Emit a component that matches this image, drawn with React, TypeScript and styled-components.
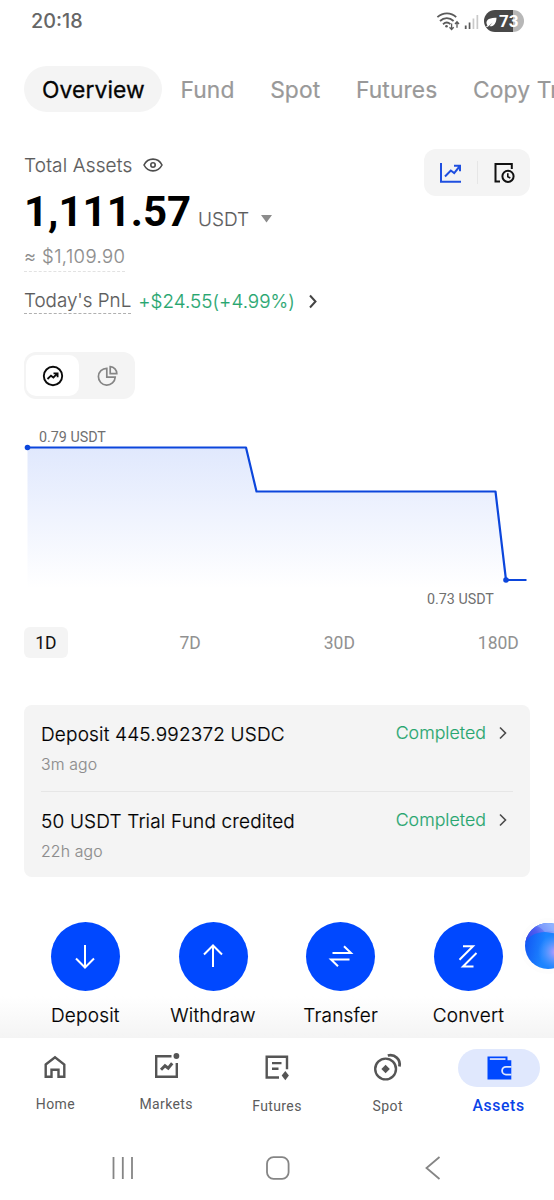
import React from "react";
import styled, { createGlobalStyle } from "styled-components";

const GlobalStyle = createGlobalStyle`
  *, *::before, *::after { box-sizing: border-box; }
  body { margin: 0; background: #fff; }
`;

const color = {
  blue: "#0048ff",
  text: "#0b0b0b",
  mid: "#5c5c5c",
  muted: "#8c8c8c",
  green: "#27a670",
  surface: "#f4f4f4",
};

const Screen = styled.div`
  width: 554px;
  height: 1200px;
  overflow: hidden;
  display: flex;
  flex-direction: column;
  position: relative;
  background: #fff;
  font-family: Inter, "Liberation Sans", sans-serif;
  color: ${color.text};
  white-space: nowrap;
`;

const StatusBar = styled.header`
  height: 66px;
  padding: 9px 30px 0 31px;
  display: flex;
  justify-content: space-between;
  align-items: flex-start;
`;

const Clock = styled.span`
  font-size: 19.8px;
  line-height: 25px;
  font-weight: 500;
  color: #666;
`;

const StatusIcons = styled.div`
  display: flex;
  align-items: center;
  height: 24px;
`;

const Tabs = styled.nav`
  display: flex;
  height: 46px;
  padding-left: 24px;
  flex-shrink: 0;
`;

const Tab = styled.span<{ $active?: boolean }>`
  font-size: 22.8px;
  line-height: 48px;
  font-weight: 400;
  letter-spacing: 0.12px;
  -webkit-text-stroke: ${(p) => (p.$active ? 0.3 : 0.2)}px currentColor;
  color: ${(p) => (p.$active ? "#050505" : "#999")};
  background: ${(p) => (p.$active ? color.surface : "transparent")};
  border-radius: 23px;
  padding: 0 17.6px 0 18px;
`;

const Summary = styled.section`
  display: flex;
  justify-content: space-between;
  padding: 37px 24px 0;
  height: 240px;
  flex-shrink: 0;
`;

const Balances = styled.div`
  display: flex;
  flex-direction: column;
  align-items: flex-start;
`;

const TitleRow = styled.div`
  display: flex;
  align-items: center;
  gap: 11px;
  height: 32px;
  font-size: 19px;
  font-weight: 300;
  letter-spacing: 0.15px;
  -webkit-text-stroke: 0.15px currentColor;
  color: ${color.mid};
`;

const AmountRow = styled.div`
  display: flex;
  align-items: baseline;
  height: 60px;
  line-height: 62px;
`;

const Amount = styled.span`
  font: 700 42px/62px Roboto, sans-serif;
  color: #000;
`;

const Currency = styled.span`
  font-size: 19px;
  font-weight: 300;
  -webkit-text-stroke: 0.15px currentColor;
  color: ${color.mid};
  margin: 0 12px 0 7px;
`;

const Approx = styled.div`
  height: 31px;
  line-height: 31px;
  font-size: 18.5px;
  font-weight: 300;
  letter-spacing: 0.4px;
  -webkit-text-stroke: 0.15px currentColor;
  color: ${color.muted};
  border-bottom: 1px dashed #e2e2e2;
`;

const PnlRow = styled.div`
  display: flex;
  align-items: flex-end;
  margin-top: 14px;
  height: 28px;
`;

const PnlLabel = styled.span`
  height: 28px;
  line-height: 29px;
  font-size: 18.8px;
  font-weight: 300;
  -webkit-text-stroke: 0.15px currentColor;
  color: ${color.mid};
  border-bottom: 1.5px dashed #b0b0b0;
`;

const PnlValue = styled.span`
  height: 28px;
  line-height: 31px;
  font-size: 18.8px;
  font-weight: 300;
  letter-spacing: 0.05px;
  -webkit-text-stroke: 0.15px currentColor;
  color: ${color.green};
  margin: 0 14px 0 7px;
`;

const ViewButtons = styled.div`
  width: 106px;
  height: 47px;
  border-radius: 12px;
  background: ${color.surface};
  display: flex;
  align-items: center;
  justify-content: space-between;
  padding: 0 14px;
`;

const Separator = styled.i`
  width: 1px;
  height: 23px;
  background: #e6e6e6;
`;

const ChartToggle = styled.div`
  width: 111px;
  height: 47px;
  margin-left: 24px;
  padding: 3px 2px;
  display: flex;
  flex-shrink: 0;
  border-radius: 12px;
  background: ${color.surface};
`;

const ToggleItem = styled.div<{ $active?: boolean }>`
  flex: ${(p) => (p.$active ? "0 0 53px" : "1")};
  display: flex;
  align-items: center;
  justify-content: center;
  padding-left: ${(p) => (p.$active ? 0 : 3)}px;
  border-radius: 10px;
  background: ${(p) => (p.$active ? "#fff" : "transparent")};
`;

const Chart = styled.svg`
  display: block;
  width: 554px;
  height: 228px;
  flex-shrink: 0;
  font: 400 14.3px Roboto, sans-serif;
`;

const Ranges = styled.div`
  display: flex;
  justify-content: space-between;
  height: 31px;
  flex-shrink: 0;
  padding: 0 23.5px;
`;

const Range = styled.span<{ $active?: boolean }>`
  font: 400 17.5px/32px Roboto, sans-serif;
  border-radius: 6px;
  padding: 0 11.7px;
  color: ${(p) => (p.$active ? "#111" : "#919191")};
  background: ${(p) => (p.$active ? color.surface : "transparent")};
`;

const Card = styled.section`
  margin: 47px 24px 0;
  height: 172px;
  flex-shrink: 0;
  padding: 0 17px;
  border-radius: 8px;
  background: ${color.surface};
`;

const Entry = styled.div`
  height: 86px;
  padding-top: 14px;
  display: flex;
  justify-content: space-between;
  & + & { border-top: 1px solid #e6e6e6; }
`;

const EntryTitle = styled.div`
  font-size: 19px;
  line-height: 31px;
  font-weight: 300;
  letter-spacing: 0.18px;
  -webkit-text-stroke: 0.2px currentColor;
  color: #000;
`;

const EntryTime = styled.div`
  font-size: 15.8px;
  line-height: 29px;
  font-weight: 300;
  letter-spacing: 0.15px;
  -webkit-text-stroke: 0.15px currentColor;
  color: ${color.muted};
`;

const EntryStatus = styled.div`
  display: flex;
  align-items: center;
  height: 27px;
  gap: 13px;
  padding-right: 6px;
  font-size: 17.8px;
  font-weight: 300;
  -webkit-text-stroke: 0.15px currentColor;
  color: ${color.green};
`;

const Actions = styled.section`
  position: relative;
  height: 161px;
  flex-shrink: 0;
  display: flex;
  padding: 44.5px 0 0 21.5px;
  background: linear-gradient(#fff 74%, #f4f4f4 100%);
`;

const Action = styled.div`
  width: 127.7px;
  display: flex;
  flex-direction: column;
  align-items: center;
  font-size: 19px;
  line-height: 31px;
  font-weight: 300;
  letter-spacing: 0.2px;
  -webkit-text-stroke: 0.2px currentColor;
  gap: 9px;
  color: #000;
`;

const ActionDisc = styled.div`
  width: 69px;
  height: 69px;
  border-radius: 50%;
  background: ${color.blue};
  display: flex;
  align-items: center;
  justify-content: center;
`;

const OrbButton = styled.svg`
  position: absolute;
  left: 519px;
  top: 40px;
  width: 58px;
  height: 58px;
`;

const BottomNav = styled.nav`
  height: 96px;
  flex-shrink: 0;
  display: flex;
  padding-top: 10.5px;
  background: #fff;
`;

const NavItem = styled.div<{ $active?: boolean; $drop?: number }>`
  width: 110.8px;
  display: flex;
  flex-direction: column;
  align-items: center;
  font: ${(p) => (p.$active ? "500 15.8px" : "400 14px")}/20px Roboto, sans-serif;
  letter-spacing: ${(p) => (p.$active ? "0.6px" : "0.4px")};
  color: ${(p) => (p.$active ? "#0a43e8" : color.mid)};
  gap: ${(p) => 7.5 + (p.$drop ?? 0)}px;
`;

const NavIcon = styled.div<{ $active?: boolean }>`
  width: 82px;
  height: 38px;
  border-radius: 19px;
  background: ${(p) => (p.$active ? "#e0e8fd" : "transparent")};
`;

const SystemNav = styled.footer`
  flex: 1;
  display: flex;
  justify-content: space-between;
  padding: 21.5px 112px 0;
`;

const Chevron = () => (
  <svg width="8" height="14" viewBox="0 0 8 14" fill="none" stroke="#4a4a4a" strokeWidth="1.6">
    <path d="M1 1.5 6.5 7 1 12.5" />
  </svg>
);

const StatusGlyphs = () => (
  <svg width="88" height="24" viewBox="0 0 88 24">
    <g fill="none" stroke="#5a5a5a" strokeWidth="1.8">
      <path d="M1.4 8.2C7 3.2 15 3.2 20.2 8.2" />
      <path d="M4 12c4-3.8 9.6-3.8 13.6 0" />
      <path d="M7 15.2c2.3-2 5.2-2 7.4 0" />
      <path d="M15.6 14.500v5.800m-2.100-2 2.100 2.200 2.100-2.200M21 18.800v-5.800m-2 2 2-2.200 2 2.200" strokeWidth="1.3" />
    </g>
    <circle cx="10.5" cy="17.3" r="1.3" fill="#5a5a5a" />
    <g fill="#5a5a5a">
      <rect x="28.8" y="16.5" width="1.8" height="3.5" />
      <rect x="32.7" y="13.5" width="1.7" height="6.5" />
      <rect x="36.6" y="9.5" width="1.7" height="10.5" fill="#c9c9c9" />
      <rect x="40.5" y="6" width="1.7" height="14" fill="#c9c9c9" />
    </g>
    <path d="M59 1h18v22H59a11 11 0 0 1 0-22Z" fill="#484848" />
    <path d="M77 1a11 11 0 0 1 0 22Z" fill="#b7b7b7" />
    <path d="M51.5 16.5c-3-4.500 1-8.300 9-7.800-.2 6-3 9.300-7 8.500l3.200-3.700-4.800 4.300-2.200.2Z" fill="#fff" />
    <text x="63" y="18" fill="#fff" fontFamily="Roboto, sans-serif" fontWeight="700" fontSize="17">73</text>
  </svg>
);

const history = [
  { title: "Deposit 445.992372 USDC", time: "3m ago" },
  { title: "50 USDT Trial Fund credited", time: "22h ago" },
];

const actions = [
  { label: "Deposit", d: "M14 3v22M5 16.5l9 9 9-9" },
  { label: "Withdraw", d: "M14 25V3M5 12.5l9-9 9 9" },
  { label: "Transfer", d: "M5.5 11H24L17 4.2M22.5 17.5H4L11 24.3" },
  { label: "Convert", d: "M9 4.2h10L5.5 17.8M22.5 11 9 24.5h10.5" },
];

const navItems = [
  {
    label: "Home",
    icon: <path d="M31.7 15.5 41 8.3l9.3 7.2v12.2h-5.800v-7h-7v7h-5.800Z" />,
  },
  {
    label: "Markets",
    icon: (
      <>
        <path d="M46.5 7.2H31.2v20.5h20.6V14" />
        <path d="m36 20.800 4-4 3.200 2.400 4-5" strokeWidth="3" />
        <circle cx="51.4" cy="7" r="2.9" fill="#555" stroke="none" />
      </>
    ),
  },
  {
    label: "Futures",
    drop: 2,
    icon: (
      <>
        <path d="M43 28.500H30.700V7.700h20.300v12.500M36 14.100h9.500M36 19.700h6.500" />
        <path d="m49.300 22 3.600 4.600-3.600 4.600-3.600-4.600Z" fill="#555" stroke="none" />
      </>
    ),
  },
  {
    label: "Spot",
    drop: 2,
    icon: (
      <>
        <circle cx="38.6" cy="20" r="10.4" />
        <path d="m38.600 15.700 4.200 4.300-4.200 4.300-4.200-4.300Z" fill="#555" stroke="none" />
        <path d="M40.800 6.500c7-1.800 13.200 4 11.600 11" strokeWidth="2.8" />
      </>
    ),
  },
  {
    label: "Assets",
    drop: 2,
    active: true,
    icon: (
      <g stroke="none">
        <path d="M29.500 7.500h20v3.800h3.800v19.200H29.500Z" fill={color.blue} />
        <path d="M31.800 9.200H47.500v1.700H31.800Z" fill="#e0e8fd" />
        <path d="M53.500 16.900H48a4.800 4.800 0 0 0 0 9.600h5.500v-1.800H48a3 3 0 0 1 0-6h5.500Z" fill="#e0e8fd" />
      </g>
    ),
  },
];

const Orb = () => (
  <OrbButton viewBox="0 0 58 58">
    <defs>
      <linearGradient id="orbBase" x1="0" y1="0" x2="1" y2="0.2">
        <stop offset="0" stopColor="#0f4ff2" />
        <stop offset="0.5" stopColor="#1c84ff" />
      </linearGradient>
      <linearGradient id="orbCap" x1="6" y1="26" x2="32" y2="8" gradientUnits="userSpaceOnUse">
        <stop offset="0" stopColor="#2b45ea" />
        <stop offset="0.5" stopColor="#4f5df0" />
        <stop offset="1" stopColor="#8fb0ff" />
      </linearGradient>
      <radialGradient id="orbGlow" cx="37" cy="35" r="18" gradientUnits="userSpaceOnUse">
        <stop offset="0" stopColor="#c79bff" />
        <stop offset="0.5" stopColor="#7fa0ff" stopOpacity="0.6" />
        <stop offset="1" stopColor="#5a9cff" stopOpacity="0" />
      </radialGradient>
      <clipPath id="orbClip"><circle cx="29" cy="29" r="23" /></clipPath>
    </defs>
    <circle cx="29" cy="29" r="28" fill="#fdfdfd" />
    <g clipPath="url(#orbClip)">
      <rect x="6" y="6" width="46" height="46" fill="url(#orbBase)" />
      <rect x="6" y="6" width="46" height="46" fill="url(#orbGlow)" />
      <path d="M6 26C10 19 16 15.5 26 15L40 17V0H6Z" fill="url(#orbCap)" />
      <path d="M14 8C20 9 23 12 26 15L40 13V0H14Z" fill="#8fb4ff" fillOpacity="0.5" />
    </g>
  </OrbButton>
);

export default function App() {
  return (
    <Screen>
      <GlobalStyle />
      <StatusBar>
        <Clock>20:18</Clock>
        <StatusIcons><StatusGlyphs /></StatusIcons>
      </StatusBar>
      <Tabs>
        <Tab $active>Overview</Tab>
        {["Fund", "Spot", "Futures", "Copy Trading"].map((t) => <Tab key={t}>{t}</Tab>)}
      </Tabs>
      <Summary>
        <Balances>
          <TitleRow>
            Total Assets
            <svg width="20" height="14" viewBox="0 0 20 14" fill="none" stroke="#4d4d4d" strokeWidth="1.6">
              <path d="M1 7C5-.8 15-.8 19 7 15 14.8 5 14.8 1 7Z" />
              <circle cx="10" cy="7" r="2.2" />
            </svg>
          </TitleRow>
          <AmountRow>
            <Amount>1,111.57</Amount>
            <Currency>USDT</Currency>
            <svg width="11" height="12" viewBox="0 0 11 12"><path d="M0 1h11L5.5 8.5Z" fill="#8c8c8c" /></svg>
          </AmountRow>
          <Approx>≈ $1,109.90</Approx>
          <PnlRow>
            <PnlLabel>Today's PnL</PnlLabel>
            <PnlValue>+$24.55(+4.99%)</PnlValue>
            <svg width="8" height="20" viewBox="0 0 8 20" fill="none" stroke="#444" strokeWidth="2">
              <path d="M1 1.5 6.5 7.5 1 13.5" />
            </svg>
          </PnlRow>
        </Balances>
        <ViewButtons>
          <svg width="24" height="24" viewBox="0 0 24 24" fill="none" stroke="#1f4fe0" strokeWidth="2">
            <path d="M3 2v18.800h20" />
            <path d="m7 15.500 5.800-6 3.400 2.600L21.500 5.500M16 4.700h6v5.500" />
          </svg>
          <Separator />
          <svg width="24" height="24" viewBox="0 0 24 24" fill="none" stroke="#111" strokeWidth="2">
            <path d="M8 20.500H3.500V3h16.300v5" />
            <circle cx="16" cy="15.3" r="5.6" />
            <path d="M15.800 12.200v3.500l2.500 1.300" strokeWidth="1.6" />
          </svg>
        </ViewButtons>
      </Summary>
      <ChartToggle>
        <ToggleItem $active>
          <svg width="22" height="22" viewBox="0 0 22 22" fill="none" stroke="#0b0b0b" strokeWidth="1.9">
            <circle cx="11" cy="11" r="9.2" />
            <path d="m5.500 14 3.500-3.300 2.400 1.800 3.800-3.800M11.500 8.300h4.100v4" strokeWidth="1.8" />
          </svg>
        </ToggleItem>
        <ToggleItem>
          <svg width="22" height="22" viewBox="0 0 22 22" fill="none" stroke="#858585" strokeWidth="1.7">
            <path d="M9.800 3.300a8.400 8.400 0 1 0 8.400 8.900H9.800Z" />
            <path d="M13.200 1.700v7h6.600a6.800 6.800 0 0 0-6.600-7Z" />
          </svg>
        </ToggleItem>
      </ChartToggle>
      <Chart viewBox="0 399 554 228">
        <defs>
          <linearGradient id="area" x1="0" y1="447" x2="0" y2="588" gradientUnits="userSpaceOnUse">
            <stop offset="0" stopColor="#e0e8fd" />
            <stop offset="1" stopColor="#fff" />
          </linearGradient>
        </defs>
        <path d="M27.5 447.5H246l10.5 44H495.5l10.5 88.5V588H27.5Z" fill="url(#area)" />
        <path d="M27.5 447.5H246l10.5 44H495.5l10.5 88.5H526.5" fill="none" stroke="#0c46dc" strokeWidth="2.2" strokeLinejoin="round" />
        <circle cx="27.5" cy="447.5" r="2.8" fill="#0c46dc" />
        <circle cx="506" cy="580" r="2.8" fill="#0c46dc" />
        <text x="39" y="442" fill="#707070">0.79 USDT</text>
        <text x="427" y="604" fill="#707070">0.73 USDT</text>
      </Chart>
      <Ranges>
        <Range $active>1D</Range>
        <Range>7D</Range>
        <Range>30D</Range>
        <Range>180D</Range>
      </Ranges>
      <Card>
        {history.map((h) => (
          <Entry key={h.title}>
            <div>
              <EntryTitle>{h.title}</EntryTitle>
              <EntryTime>{h.time}</EntryTime>
            </div>
            <EntryStatus>Completed <Chevron /></EntryStatus>
          </Entry>
        ))}
      </Card>
      <Actions>
        {actions.map((a) => (
          <Action key={a.label}>
            <ActionDisc>
              <svg width="28" height="28" viewBox="0 0 28 28" fill="none" stroke="#fff" strokeWidth="2">
                <path d={a.d} />
              </svg>
            </ActionDisc>
            {a.label}
          </Action>
        ))}
        <Orb />
      </Actions>
      <BottomNav>
        {navItems.map((n) => (
          <NavItem key={n.label} $active={n.active} $drop={n.drop}>
            <NavIcon $active={n.active}>
              <svg width="82" height="38" viewBox="0 0 82 38" fill="none" stroke="#555" strokeWidth="2.4">{n.icon}</svg>
            </NavIcon>
            {n.label}
          </NavItem>
        ))}
      </BottomNav>
      <SystemNav>
        <svg width="22" height="24" viewBox="0 0 22 24" stroke="#858585" strokeWidth="1.8"><path d="M1.5 1v22M10.8 1v22M20 1v22" /></svg>
        <svg width="28" height="24" viewBox="0 0 28 24" fill="none" stroke="#858585" strokeWidth="1.8"><rect x="1" y="1.2" width="21.6" height="21.6" rx="6.5" /></svg>
        <svg width="17" height="24" viewBox="0 0 17 24" fill="none" stroke="#858585" strokeWidth="1.8"><path d="M14.5 1 1.5 12l13 11" /></svg>
      </SystemNav>
    </Screen>
  );
}
